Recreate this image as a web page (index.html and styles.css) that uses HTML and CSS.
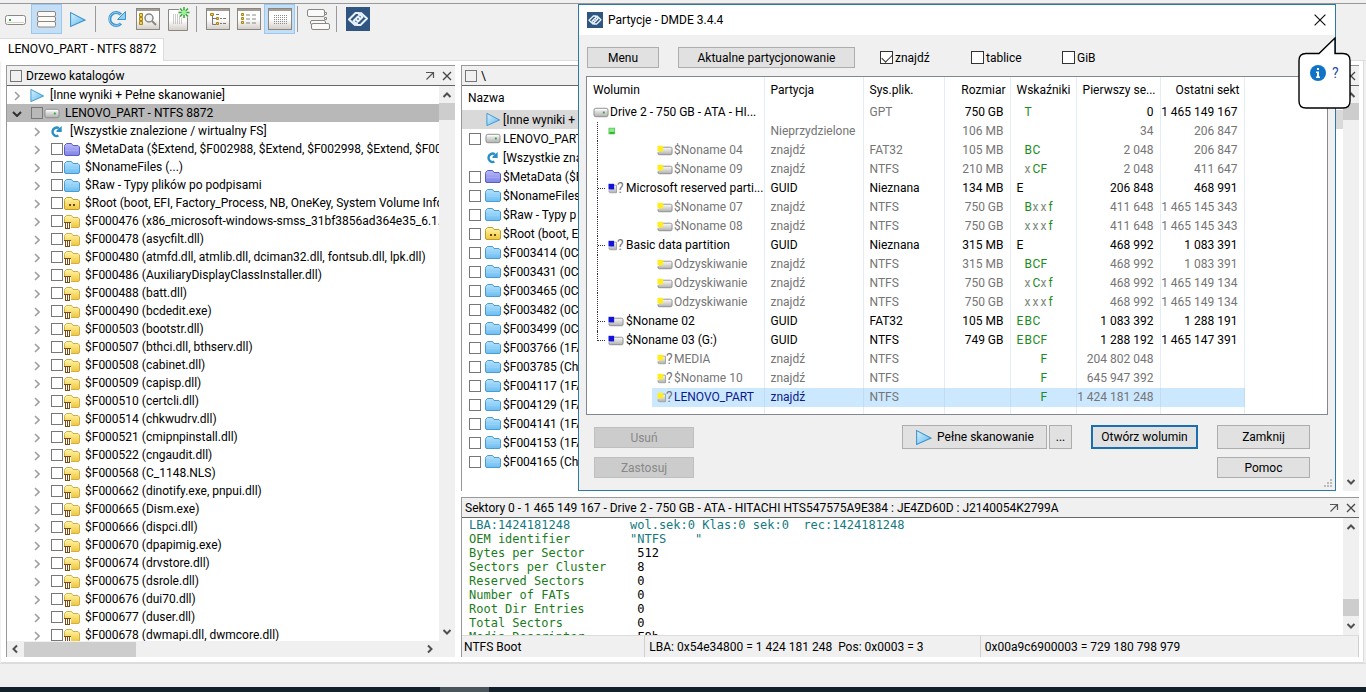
FILE: index.html
```html
<!DOCTYPE html>
<html lang="pl">
<head>
    <meta charset="UTF-8">
    <meta name="viewport" content="width=device-width, initial-scale=1.0">
    <title>DMDE 3.4.4</title>
    <link rel="stylesheet" href="styles.css">
</head>
<body>
    <svg class="sprite" aria-hidden="true">
        <defs>
            <linearGradient id="g-blue" x1="0" y1="0" x2="1" y2="1">
                <stop offset="0" stop-color="#d8f1fd"/><stop offset="1" stop-color="#5fb8ee"/>
            </linearGradient>
            <linearGradient id="g-sky" x1="0" y1="0" x2="0" y2="1">
                <stop offset="0" stop-color="#b4e2fc"/><stop offset="1" stop-color="#6dbdf2"/>
            </linearGradient>
            <linearGradient id="g-violet" x1="0" y1="0" x2="0" y2="1">
                <stop offset="0" stop-color="#b9b9f8"/><stop offset="1" stop-color="#7f84e6"/>
            </linearGradient>
            <linearGradient id="g-gold" x1="0" y1="0" x2="0" y2="1">
                <stop offset="0" stop-color="#fff7a8"/><stop offset="1" stop-color="#efc63c"/>
            </linearGradient>
            <linearGradient id="g-disk" x1="0" y1="0" x2="0" y2="1">
                <stop offset="0" stop-color="#fbfbfb"/><stop offset="1" stop-color="#b0b0b0"/>
            </linearGradient>
            <linearGradient id="g-panel" x1="0" y1="0" x2="0" y2="1">
                <stop offset="0.5" stop-color="#fff"/><stop offset="1" stop-color="#d2cdc8"/>
            </linearGradient>
            <path id="folder-shape" d="M.5 4.5V12q0 1.500 1.500 1.500h12q1.500 0 1.500-1.500V5l-1.500-1.500h-5L7.500 1.500h-5L.5 3.500z"/>
        </defs>
        <symbol id="i-play" viewBox="0 0 16 16"><path d="M1.500 1.500v13L15 8.500z" fill="url(#g-blue)" stroke="#3c94cc"/></symbol>
        <symbol id="i-disk" viewBox="0 0 16 16"><rect x=".5" y="3.500" width="15" height="9" rx="2" fill="url(#g-disk)" stroke="#8c8c8c"/><path d="M2 5h12" stroke="#fff"/><rect x="10" y="7" width="2" height="2" fill="#2ea82e"/></symbol>
        <symbol id="i-refresh" viewBox="0 0 16 16"><path d="M9.500 12.500a4.500 4.500 0 1 1 .5-8" fill="none" stroke="#2b8fc4" stroke-width="2.600"/><path d="M13 2v6.500H7.500V7z" fill="#2b8fc4"/></symbol>
        <symbol id="i-blue" viewBox="0 0 16 15"><use href="#folder-shape" fill="url(#g-sky)" stroke="#4a9bd0"/><path d="M1.500 8.500h13" stroke="#93d2f8"/></symbol>
        <symbol id="i-meta" viewBox="0 0 16 15"><use href="#folder-shape" fill="url(#g-violet)" stroke="#5a5cc0"/><path d="M1.500 8.500h13" stroke="#a3a7f2"/></symbol>
        <symbol id="i-root" viewBox="0 0 16 15"><use href="#folder-shape" fill="url(#g-gold)" stroke="#c79a2c"/><path d="M5 8h2v2H5zM9 8h2v2H9z" fill="#6b4a10"/></symbol>
        <symbol id="i-deleted" viewBox="0 0 16 15"><use href="#folder-shape" fill="url(#g-gold)" stroke="#d3ad45"/><path d="M0 8h7v7H0z" fill="#fff"/><path d="M0 8.500h7M1.500 9v5.500M3.500 9v5.500M5.500 9v5.500M1 14.500h5" stroke="#7a4a14" fill="none"/></symbol>
        <symbol id="i-free" viewBox="0 0 16 16"><rect x=".5" y="4.500" width="6" height="6" fill="#8be88b" stroke="#5cc85c"/><path d="M1 8.500h5v2H1z" fill="#2fb52f"/></symbol>
        <symbol id="i-part" viewBox="0 0 16 16"><path d="M6 4.500h8q1.500 0 1.500 1.500v5q0 1.500-1.500 1.500H2q-1.500 0-1.500-1.500V10" fill="url(#g-disk)" stroke="#8c8c8c"/><rect x="0" y="3" width="6" height="6" fill="currentColor"/></symbol>
        <symbol id="i-part-q" viewBox="0 0 16 16"><path d="M6 4.500h2.500v8H2q-1.500 0-1.500-1.500V10" fill="url(#g-disk)" stroke="#a0a0a0"/><rect x="0" y="3" width="6" height="6" fill="currentColor"/></symbol>
        <symbol id="i-open" viewBox="0 0 6 10"><path d="M1 1l4 4-4 4" fill="none" stroke="#a0a0a0" stroke-width="1.600"/></symbol>
        <symbol id="i-shut" viewBox="0 0 10 6"><path d="M1 1l4 4 4-4" fill="none" stroke="#303030" stroke-width="2"/></symbol>
        <symbol id="i-float" viewBox="0 0 10 10"><path d="M1 1.500h7.500V7M8.500 1.500L1.500 8.500" fill="none" stroke="#555" stroke-width="1.200"/></symbol>
        <symbol id="i-close" viewBox="0 0 10 10"><path d="M1 1l8 8M9 1L1 9" fill="none" stroke="#444" stroke-width="1.300"/></symbol>
        <symbol id="i-chevron" viewBox="0 0 10 10"><path d="M1.500 7L5 3.500 8.500 7" fill="none" stroke="#505050" stroke-width="2"/></symbol>
        <symbol id="i-logo" viewBox="0 0 24 24"><rect width="24" height="24" fill="#2f5580"/><g fill="none" stroke="#e8f2fb" stroke-width="2" stroke-linejoin="round"><path d="M11.500 15.500L9 18 3 12.500 9.500 6H13l3.500 4-4.500 4.500-2.500-2.500"/><path d="M12.500 8.500L15 6l6 5.500-6.500 6.500H11l-3.500-4L12 9.500l2.500 2.500"/></g></symbol>
    </svg>

    <div class="toolbar">
        <button class="tool" aria-label="Dysk"><svg width="21" height="12" viewBox="0 0 21 12"><rect x=".5" y="2.500" width="20" height="9" rx="2" fill="#fafafa" stroke="#8c8680"/><path d="M2 9.500h17" stroke="#d5d0c8"/><rect x="4" y="6" width="2" height="2" fill="#2ea82e"/></svg></button>
        <button class="tool active" aria-label="Wolumin"><svg width="19" height="17" viewBox="0 0 19 17"><g fill="#fbfaf8" stroke="#8c8680"><rect x=".5" y=".5" width="18" height="5" rx="1.500"/><rect x=".5" y="5.500" width="18" height="5" rx="1.500"/><rect x=".5" y="10.500" width="18" height="5.500" rx="1.500"/></g></svg></button>
        <button class="tool" aria-label="Skanuj"><svg width="17" height="17"><use href="#i-play"/></svg></button>
        <span class="sep"></span>
        <button class="tool" aria-label="Odśwież"><svg width="20" height="18" viewBox="0 0 20 18"><path d="M14 13.500a6.500 6.500 0 1 1 0-9" fill="none" stroke="#3b93cc" stroke-width="3"/><path d="M13.600 13.500a6.500 6.500 0 1 1 0-9" fill="none" stroke="#8fd0f2"/><path d="M18.500 1.500v8h-8z" fill="#8fd0f2" stroke="#3b93cc"/></svg></button>
        <button class="tool" aria-label="Szukaj"><svg width="24" height="22" viewBox="0 0 24 22"><rect x=".5" y=".5" width="23" height="21" fill="url(#g-panel)" stroke="#8c8680"/><path d="M1 2h22" stroke="#a39d96" stroke-width="2"/><g fill="#f4d04a" stroke="#a8851a"><path d="M3.500 5.500h3v3h-3zM3.500 9.500h3v3h-3zM3.500 13.500h3v3h-3z"/></g><circle cx="13" cy="10" r="4" fill="#eef4f8" stroke="#8c8680" stroke-width="1.500"/><path d="M16 13l4 4" stroke="#8c8680" stroke-width="2"/></svg></button>
        <button class="tool" aria-label="Nowy"><svg width="22" height="24" viewBox="0 0 22 24"><path d="M.5 2.500h19v21H.5z" fill="url(#g-panel)" stroke="#8c8680"/><path d="M5 8h10M5 10h10M5 12h10M5 14h10M5 16h10" stroke="#999" stroke-dasharray="1 1"/><circle cx="16" cy="5.500" r="6" fill="#f0f0f0"/><path d="M16 0v11M10.500 5.500h11M12 1.500l8 8M20 1.500l-8 8" stroke="#36a836" stroke-width="1.500"/><circle cx="16" cy="5.500" r="2.500" fill="#9bf09b"/></svg></button>
        <span class="sep"></span>
        <button class="tool" aria-label="Drzewo"><svg width="24" height="22" viewBox="0 0 24 22"><rect x=".5" y=".5" width="23" height="21" fill="url(#g-panel)" stroke="#8c8680"/><path d="M1 2h22" stroke="#a39d96" stroke-width="2"/><path d="M6.500 7v9.500H10M6.500 10.500H10M14 10.500h2m1 0h3M14 15.500h2m1 0h3M10 6.500h3" stroke="#777" fill="none"/><g fill="#f4d04a" stroke="#a8851a"><path d="M4.500 5.500h3v2h-3zM10.500 9.500h2v2h-2zM10.500 14.500h2v2h-2z"/></g></svg></button>
        <button class="tool" aria-label="Lista"><svg width="24" height="22" viewBox="0 0 24 22"><rect x=".5" y=".5" width="23" height="21" fill="url(#g-panel)" stroke="#8c8680"/><path d="M1 2h22" stroke="#a39d96" stroke-width="2"/><path d="M9 7h4m2 0h4M9 11h4m2 0h4M9 15h4m2 0h4" stroke="#888"/><g fill="#f4d04a" stroke="#a8851a"><path d="M4.500 5.500h2v2h-2zM4.500 9.500h2v2h-2zM4.500 13.500h2v2h-2z"/></g></svg></button>
        <button class="tool active" aria-label="Hex"><svg width="24" height="22" viewBox="0 0 24 22"><rect x=".5" y=".5" width="23" height="21" fill="url(#g-panel)" stroke="#8c8680"/><path d="M1 2h22" stroke="#a39d96" stroke-width="2"/><path d="M6 7.500h13M6 9.500h13M6 11.500h13M6 13.500h13M6 15.500h13" stroke="#8a8a8a" stroke-dasharray="1 1"/></svg></button>
        <span class="sep"></span>
        <button class="tool" aria-label="Kopiuj"><svg width="24" height="23" viewBox="0 0 24 23"><g fill="#fafafa" stroke="#8c8680"><rect x=".5" y="1.500" width="17" height="7" rx="1.500"/><rect x="3.500" y="12.500" width="15" height="4" rx="1.500"/><rect x="4.500" y="15.500" width="18" height="6" rx="1.500"/><path d="M17.500 4.500h2v2h-2zM17.500 9.500h2v2h-2z"/></g></svg></button>
        <span class="sep"></span>
        <button class="tool" aria-label="DMDE"><svg width="24" height="24"><use href="#i-logo"/></svg></button>
    </div>

    <div class="tabs"><a href="#" class="tab">LENOVO_PART - NTFS 8872</a></div>

    <main class="workspace">
        <section class="pane tree-pane">
            <header class="pane-head">
                <label><input type="checkbox" class="check"> Drzewo katalogów</label>
                <svg width="10" height="10"><use href="#i-float"/></svg>
                <svg width="10" height="10"><use href="#i-close"/></svg>
            </header>
            <div class="pane-body">
                <ul class="tree" id="tree"></ul>
                <div class="vbar">
                    <svg width="10" height="10"><use href="#i-chevron"/></svg>
                    <span class="thumb"></span>
                    <svg class="down" width="10" height="10"><use href="#i-chevron"/></svg>
                </div>
            </div>
            <div class="hbar">
                <svg class="prev" width="10" height="10"><use href="#i-chevron"/></svg>
                <span class="thumb"></span>
                <svg class="next" width="10" height="10"><use href="#i-chevron"/></svg>
            </div>
        </section>

        <div class="side">
            <section class="pane files-pane">
                <header class="pane-head">
                    <label><input type="checkbox" class="check"> \</label>
                    <svg width="10" height="10"><use href="#i-close"/></svg>
                </header>
                <div class="pane-body">
                    <div class="files">
                        <div class="files-head">Nazwa</div>
                        <ul id="files"></ul>
                    </div>
                    <div class="vbar">
                        <svg width="10" height="10"><use href="#i-chevron"/></svg>
                        <span class="thumb"></span>
                        <svg class="down" width="10" height="10"><use href="#i-chevron"/></svg>
                    </div>
                </div>
            </section>

            <section class="pane hex-pane">
                <header class="pane-head">
                    <span>Sektory 0 - 1 465 149 167 - Drive 2 - 750 GB - ATA - HITACHI HTS547575A9E384 : JE4ZD60D : J2140054K2799A</span>
                    <svg width="10" height="10"><use href="#i-float"/></svg>
                    <svg width="10" height="10"><use href="#i-close"/></svg>
                </header>
                <div class="pane-body">
                    <dl class="hex">
                        <dt class="teal">LBA:1424181248</dt><dd class="teal">wol.sek:0 Klas:0 sek:0  rec:1424181248</dd>
                        <dt>OEM identifier</dt><dd class="teal">"NTFS    "</dd>
                        <dt>Bytes per Sector</dt><dd> 512</dd>
                        <dt>Sectors per Cluster</dt><dd> 8</dd>
                        <dt>Reserved Sectors</dt><dd> 0</dd>
                        <dt>Number of FATs</dt><dd> 0</dd>
                        <dt>Root Dir Entries</dt><dd> 0</dd>
                        <dt>Total Sectors</dt><dd> 0</dd>
                        <dt>Media Descriptor</dt><dd> F8h</dd>
                    </dl>
                    <div class="vbar low">
                        <svg width="10" height="10"><use href="#i-chevron"/></svg>
                        <span class="thumb"></span>
                        <svg class="down" width="10" height="10"><use href="#i-chevron"/></svg>
                    </div>
                </div>
                <footer class="hex-status">
                    <span>NTFS Boot</span>
                    <span>LBA: 0x54e34800 = 1 424 181 248&nbsp; Pos: 0x0003 = 3</span>
                    <span>0x00a9c6900003 = 729 180 798 979</span>
                </footer>
            </section>
        </div>
    </main>
    <footer class="statusbar"></footer>
    <div class="taskbar"><span></span></div>

    <div class="dialog" role="dialog" aria-labelledby="dialog-title">
        <header class="dialog-title">
            <svg width="16" height="16"><use href="#i-logo"/></svg>
            <span id="dialog-title">Partycje - DMDE 3.4.4</span>
            <button class="close" aria-label="Zamknij okno"><svg width="12" height="12" viewBox="0 0 10 10"><path d="M.5.5l9 9M9.500.5l-9 9" stroke="#111" fill="none"/></svg></button>
        </header>
        <div class="dialog-tools">
            <button class="btn menu">Menu</button>
            <button class="btn current">Aktualne partycjonowanie</button>
            <label><input type="checkbox" class="check" checked>znajdź</label>
            <label><input type="checkbox" class="check">tablice</label>
            <label><input type="checkbox" class="check">GiB</label>
        </div>
        <div class="volumes">
            <table>
                <colgroup><col class="c-name"><col class="c-part"><col class="c-fs"><col class="c-size"><col class="c-flags"><col class="c-sec"><col class="c-sec"></colgroup>
                <thead>
                    <tr><th>Wolumin</th><th>Partycja</th><th>Sys.plik.</th><th class="num">Rozmiar</th><th>Wskaźniki</th><th class="num">Pierwszy se...</th><th class="num">Ostatni sekt</th></tr>
                </thead>
                <tbody id="volumes"></tbody>
            </table>
        </div>
        <div class="dialog-actions">
            <div class="stack">
                <button class="btn" disabled>Usuń</button>
                <button class="btn" disabled>Zastosuj</button>
            </div>
            <div class="scan">
                <button class="btn scan-full"><svg width="17" height="17"><use href="#i-play"/></svg>Pełne skanowanie</button>
                <button class="btn more">...</button>
                <button class="btn primary">Otwórz wolumin</button>
            </div>
            <div class="stack end">
                <button class="btn tall">Zamknij</button>
                <button class="btn">Pomoc</button>
            </div>
        </div>
        <svg class="grip" width="9" height="9" viewBox="0 0 9 9"><path d="M6 0h2v2H6zM3 3h2v2H3zM6 3h2v2H6zM0 6h2v2H0zM3 6h2v2H3zM6 6h2v2H6z" fill="#bbb"/></svg>
    </div>

    <div class="callout">
        <svg class="bubble" width="53" height="72" viewBox="0 0 53 72"><path d="M8 16.500h13L37 1v15.500h8q7 0 7 7V64q0 7-7 7H8q-7 0-7-7V23.500q0-7 7-7z" fill="#fff" stroke="#000" stroke-width="1.400"/></svg>
        <div class="callout-text">
            <svg width="16" height="16" viewBox="0 0 16 16"><circle cx="8" cy="8" r="8" fill="#1173c7"/><path d="M7 3h2v2H7zM6 6.500h3v5h1V13H6v-1.500h1V8H6z" fill="#fff"/></svg>
            <span>?</span>
        </div>
    </div>

    <script>
        const icon = name => `<svg class="icon"><use href="#i-${name}"/></svg>`;

        // [level, icon, text, checkbox, state]
        const tree = [
            [0, 'play', '[Inne wyniki + Pełne skanowanie]', false],
            [0, 'disk', 'LENOVO_PART - NTFS 8872', true, 'selected'],
            [1, 'refresh', '[Wszystkie znalezione / wirtualny FS]', false],
            [1, 'meta', '$MetaData ($Extend, $F002988, $Extend, $F002998, $Extend, $F003002)', true],
            [1, 'blue', '$NonameFiles (...)', true],
            [1, 'blue', '$Raw - Typy plików po podpisami', true],
            [1, 'root', '$Root (boot, EFI, Factory_Process, NB, OneKey, System Volume Information)', true]
        ];
        [
            '476 (x86_microsoft-windows-smss_31bf3856ad364e35_6.1.7601)', '478 (asycfilt.dll)',
            '480 (atmfd.dll, atmlib.dll, dciman32.dll, fontsub.dll, lpk.dll)', '486 (AuxiliaryDisplayClassInstaller.dll)',
            '488 (batt.dll)', '490 (bcdedit.exe)', '503 (bootstr.dll)', '507 (bthci.dll, bthserv.dll)',
            '508 (cabinet.dll)', '509 (capisp.dll)', '510 (certcli.dll)', '514 (chkwudrv.dll)',
            '521 (cmipnpinstall.dll)', '522 (cngaudit.dll)', '568 (C_1148.NLS)', '662 (dinotify.exe, pnpui.dll)',
            '665 (Dism.exe)', '666 (dispci.dll)', '670 (dpapimig.exe)', '674 (drvstore.dll)',
            '675 (dsrole.dll)', '676 (dui70.dll)', '677 (duser.dll)', '678 (dwmapi.dll, dwmcore.dll)'
        ].forEach(name => tree.push([1, 'deleted', '$F000' + name, true]));

        document.getElementById('tree').innerHTML = tree.map(([level, ic, text, box, state]) => `
            <li class="level-${level} ${box ? 'boxed' : ''} ${state || ''}">
                <span class="twist"><svg class="${state ? 'shut' : 'open'}"><use href="#i-${state ? 'shut' : 'open'}"/></svg></span>
                <label>${box ? '<input type="checkbox" class="check">' : ''}${icon(ic)}<span>${text}</span></label>
            </li>`).join('');

        const files = [
            ['play', '[Inne wyniki +'], ['disk', 'LENOVO_PART'], ['refresh', '[Wszystkie zna'],
            ['meta', '$MetaData ($E'], ['blue', '$NonameFiles'], ['blue', '$Raw - Typy p'], ['root', '$Root (boot, E']
        ];
        ['3414 (0CB', '3431 (0CB', '3465 (0CB', '3482 (0CB', '3499 (0CB', '3766 (1FA', '3785 (Chk',
            '4117 (1FA', '4129 (1FA', '4141 (1FA', '4153 (1FA', '4165 (Chk'
        ].forEach(name => files.push(['blue', '$F00' + name]));

        document.getElementById('files').innerHTML = files.map(([ic, text]) => {
            const box = ic !== 'play' && ic !== 'refresh';
            return `<li class="${ic === 'play' ? 'selected' : ''}"><label>
                ${box ? '<input type="checkbox" class="check">' : '<span class="nocheck"></span>'}${icon(ic)}<span>${text}</span></label></li>`;
        }).join('');

        // row class, icon, name, partition, file system, size, flags (x and e are special), first and last sector
        const volumes = [
            ['drive', 'disk', 'Drive 2 - 750 GB - ATA - HI...', '', 'GPT', '750 GB', ' T', '0', '1 465 149 167'],
            ['free', 'free', '', 'Nieprzydzielone', '', '106 MB', '', '34', '206 847'],
            ['found', 'part', '$Noname 04', 'znajdź', 'FAT32', '105 MB', ' BC', '2 048', '206 847'],
            ['found', 'part', '$Noname 09', 'znajdź', 'NTFS', '210 MB', ' xCF', '2 048', '411 647'],
            ['part', 'part-q', 'Microsoft reserved parti...', 'GUID', 'Nieznana', '134 MB', 'e', '206 848', '468 991'],
            ['found', 'part', '$Noname 07', 'znajdź', 'NTFS', '750 GB', ' Bxxf', '411 648', '1 465 145 343'],
            ['found', 'part', '$Noname 08', 'znajdź', 'NTFS', '750 GB', ' xxxf', '411 648', '1 465 145 343'],
            ['part', 'part-q', 'Basic data partition', 'GUID', 'Nieznana', '315 MB', 'e', '468 992', '1 083 391'],
            ['found', 'part', 'Odzyskiwanie', 'znajdź', 'NTFS', '315 MB', ' BCF', '468 992', '1 083 391'],
            ['found', 'part', 'Odzyskiwanie', 'znajdź', 'NTFS', '750 GB', ' xCxf', '468 992', '1 465 149 134'],
            ['found', 'part', 'Odzyskiwanie', 'znajdź', 'NTFS', '750 GB', ' xxxf', '468 992', '1 465 149 134'],
            ['part', 'part', '$Noname 02', 'GUID', 'FAT32', '105 MB', 'EBC', '1 083 392', '1 288 191'],
            ['part last', 'part', '$Noname 03 (G:)', 'GUID', 'NTFS', '749 GB', 'EBCF', '1 288 192', '1 465 147 391'],
            ['found after', 'part-q', 'MEDIA', 'znajdź', 'NTFS', '', '   F', '204 802 048', ''],
            ['found after', 'part-q', '$Noname 10', 'znajdź', 'NTFS', '', '   F', '645 947 392', ''],
            ['found after selected', 'part-q', 'LENOVO_PART', 'znajdź', 'NTFS', '', '   F', '1 424 181 248', '']
        ];

        const flag = c => c === 'e' ? '<i class="plain">E</i>' : `<i class="${c === 'x' ? 'grey' : 'green'}">${c}</i>`;

        document.getElementById('volumes').innerHTML = volumes.map(([kind, ic, name, part, fs, size, flags, first, last]) => `
            <tr class="${kind}">
                <td class="name"><div>${icon(ic)}${ic === 'part-q' ? '<b class="query">?</b>' : ''}<span>${name}</span></div></td>
                <td>${part}</td><td class="fs">${fs}</td><td class="num">${size}</td>
                <td class="flags">${[...flags].map(flag).join('')}</td>
                <td class="num">${first}</td><td class="num">${last}</td>
            </tr>`).join('') + '<tr class="filler">' + '<td></td>'.repeat(7) + '</tr>';
    </script>
</body>
</html>
```
FILE: styles.css
```css
* {
    box-sizing: border-box;
}
body {
    margin: 0;
    height: 100vh;
    display: flex;
    flex-direction: column;
    overflow: hidden;
    background: #f0f0f0;
    color: #000;
    font: 12px/18px Roboto, "Open Sans", sans-serif;
}
button, input {
    font: inherit;
    color: inherit;
}
ul, dl, dd {
    margin: 0;
    padding: 0;
    list-style: none;
}
svg {
    display: block;
    flex: none;
}
.sprite {
    position: absolute;
    width: 0;
    height: 0;
}
.icon {
    width: 16px;
    height: 15px;
}
.check {
    appearance: none;
    flex: none;
    width: 12px;
    height: 12px;
    margin: 0;
    border: 1px solid #777;
    background: #fff;
}

/* toolbar */
.toolbar {
    flex: none;
    display: flex;
    height: 38px;
    padding-top: 1px;
    border-top: 3px solid #f0f0f0;
    box-shadow: inset 0 1px #999;
}
.tool {
    width: 31px;
    height: 30px;
    padding: 0;
    display: flex;
    align-items: center;
    justify-content: center;
    border: 1px solid transparent;
    background: none;
}
.tool.active {
    background: #c4def5;
    border-color: #9bc8ee;
}
.sep {
    width: 1px;
    height: 26px;
    margin: 2px 5px 0 2px;
    background: #999;
}

/* tabs */
.tabs {
    flex: none;
    height: 23px;
    display: flex;
    background: #f0f0f0;
    border-bottom: 1px solid #dcdcdc;
}
.tab {
    height: 23px;
    padding: 1px 7px 0 8px;
    border: 1px solid #dcdcdc;
    border-width: 1px 1px 0 0;
    background: #fff;
    color: #000;
    text-decoration: none;
    white-space: nowrap;
}

/* workspace */
.workspace {
    flex: 1;
    min-height: 0;
    display: grid;
    grid-template-columns: 449px minmax(0, 1fr);
    grid-template-rows: minmax(0, 1fr);
    gap: 6px;
    margin: 0 2px 0 1px;
    padding: 4px 4px 5px 5px;
    background: #fff;
    border: solid #dcdcdc;
    border-width: 0 1px 1px 0;
}
.side {
    display: flex;
    flex-direction: column;
    gap: 6px;
    min-height: 0;
}
.pane {
    display: flex;
    flex-direction: column;
    min-height: 0;
    border-left: 1px solid #999;
}
.pane-head {
    flex: none;
    display: flex;
    align-items: center;
    gap: 7px;
    height: 21px;
    padding: 0 3px 0 3px;
    background: #f0f0f0;
    border-top: 1px solid #999;
    border-bottom: 1px solid #666;
    white-space: nowrap;
}
.pane-head label,
.pane-head > span {
    display: flex;
    flex: 1;
    align-items: center;
    gap: 4px;
}
.pane-head .check {
    background: none;
}
.pane-body {
    flex: 1;
    display: flex;
    min-height: 0;
}
.files-pane {
    flex: 1;
}
.hex-pane {
    height: 160px;
}

/* scrollbars */
.vbar,
.hbar {
    flex: none;
    display: flex;
    align-items: center;
    background: #f0f0f0;
}
.vbar {
    flex-direction: column;
    width: 16px;
    padding: 4px 0;
}
.hbar {
    height: 16px;
    padding: 0 20px 0 3px;
}
.thumb {
    background: #cdcdcd;
}
.vbar .thumb {
    width: 16px;
    height: 17px;
    margin-top: 3px;
}
.vbar.low .thumb {
    margin-top: auto;
    margin-bottom: 5px;
}
.hbar .thumb {
    width: 112px;
    height: 15px;
    margin-left: 4px;
}
.down {
    transform: rotate(180deg);
    margin-top: auto;
}
.vbar.low .down {
    margin-top: 0;
}
.prev {
    transform: rotate(-90deg);
}
.next {
    transform: rotate(90deg);
    margin-left: auto;
}

/* directory tree */
.tree {
    flex: 1;
    overflow: hidden;
}
.tree li,
.tree label {
    display: flex;
    align-items: center;
    height: 18px;
    white-space: nowrap;
}
.tree .level-1 {
    padding-left: 20px;
}
.tree .selected {
    background: #b8b8b8;
}
.tree .selected .check {
    background: none;
}
.twist {
    flex: none;
    width: 20px;
}
.twist .open {
    width: 6px;
    height: 10px;
    margin: 2px 0 0 7px;
}
.twist .shut {
    width: 10px;
    height: 6px;
    margin: 2px 0 0 5px;
}
.tree label {
    padding-left: 2px;
    gap: 5px;
}
.tree .boxed label {
    padding-left: 4px;
}
.tree .boxed .check {
    margin-right: -4px;
}

/* file list */
.files {
    flex: 1;
    overflow: hidden;
}
.files-head {
    height: 24px;
    padding: 3px 6px;
}
.files li,
.files label {
    display: flex;
    align-items: center;
    height: 19px;
    white-space: nowrap;
}
.files label {
    padding-left: 7px;
}
.files .icon {
    margin: 0 2px 0 4px;
}
.files .selected {
    background: #d9d9d9;
}
.nocheck {
    width: 12px;
}

/* sector view */
.hex {
    flex: 1;
    display: grid;
    grid-template-columns: 161px 1fr;
    grid-auto-rows: 14px;
    padding: 0 0 0 7px;
    overflow: hidden;
    font: 12px/14px "DejaVu Sans Mono", monospace;
    white-space: pre;
}
.hex dt {
    color: #1c7c1c;
}
.hex .teal {
    color: #14797f;
}
.hex-status {
    flex: none;
    display: flex;
    height: 22px;
    background: #f0f0f0;
    border-top: 1px solid #dcdcdc;
    white-space: nowrap;
}
.hex-status span {
    padding: 2px 5px 0 4px;
    border-right: 1px solid #d0d0d0;
}
.hex-status span:nth-child(1) {
    flex: 181;
    padding-left: 2px;
}
.hex-status span:nth-child(2) {
    flex: 336;
}
.hex-status span:nth-child(3) {
    flex: 380;
}
.statusbar {
    flex: none;
    height: 24px;
    border-top: 1px solid #dcdcdc;
}
.taskbar {
    flex: none;
    height: 5px;
    background: #14212a;
}
.taskbar span {
    display: block;
    width: 49px;
    height: 5px;
    margin-left: 440px;
    background: #49545b;
}

/* partition dialog */
.dialog {
    position: absolute;
    top: 4px;
    left: 578px;
    right: 30px;
    padding-bottom: 12px;
    background: #f0f0f0;
    border: 1px solid #2a7aa5;
}
.dialog-title {
    display: flex;
    align-items: center;
    gap: 5px;
    height: 30px;
    padding: 0 9px 0 8px;
    background: #fff;
}
.close {
    display: flex;
    margin-left: auto;
    padding: 0;
    border: 0;
    background: none;
}
.dialog-tools {
    display: flex;
    align-items: center;
    padding: 12px 8px 8px;
}
.dialog-tools label {
    display: flex;
    align-items: center;
    gap: 2px;
    width: 91px;
}
.dialog-tools .check {
    width: 13px;
    height: 13px;
    border-color: #333;
}
.dialog-tools .check:checked::after {
    content: "";
    display: block;
    width: 9px;
    height: 5px;
    margin: 2px 0 0 1px;
    border: solid #333;
    border-width: 0 0 1px 1px;
    transform: rotate(-45deg);
}
.btn {
    display: flex;
    align-items: center;
    justify-content: center;
    height: 21px;
    padding: 0;
    border: 1px solid #adadad;
    background: #e1e1e1;
    white-space: nowrap;
}
.btn:disabled {
    background: #ccc;
    border-color: #bfbfbf;
    color: #888;
}
.menu {
    width: 72px;
    margin-right: 19px;
}
.current {
    width: 177px;
    margin-right: 25px;
}

.volumes {
    margin: 0 7px;
    background: #fff;
    border: 1px solid #828790;
}
.volumes table {
    width: 657px;
    table-layout: fixed;
    border-collapse: collapse;
}
.c-name { width: 177px; }
.c-part { width: 99px; }
.c-fs { width: 81px; }
.c-size, .c-flags { width: 66px; }
.c-sec { width: 84px; }
.volumes th,
.volumes td {
    height: 19px;
    padding: 0 6px;
    border-right: 1px solid #e3edf5;
    font-weight: normal;
    line-height: 17px;
    text-align: left;
    white-space: nowrap;
}
.volumes th {
    height: 26px;
    padding-right: 4px;
}
.volumes .num {
    padding: 0 6px 0 0;
    text-align: right;
}
.volumes th.num {
    padding-right: 4px;
}
.volumes .filler td {
    height: 7px;
}
.volumes .name {
    position: relative;
    padding: 0 0 0 6px;
}
.name div {
    display: flex;
    align-items: center;
    gap: 1px;
}
.part .name div,
.free .name div {
    padding-left: 15px;
    gap: 2px;
}
.found .name div {
    padding-left: 64px;
}
.query {
    width: 7px;
    margin: 0 0 0 -8px;
    color: #777;
    font-weight: normal;
    font-size: 14px;
}
.part .query {
    margin-left: -9px;
}
.name::before {
    content: "";
    position: absolute;
    top: 0;
    bottom: 0;
    left: 10px;
    border-left: 1px dotted #333;
}
.drive .name::before,
.after .name::before {
    display: none;
}
.last .name::before {
    bottom: 9px;
}
.part .name::after {
    content: "";
    position: absolute;
    top: 9px;
    left: 11px;
    width: 7px;
    border-top: 1px dotted #333;
}
.part .icon {
    color: #1414d8;
}
.found .icon {
    color: #ffee1c;
}
.free td,
.found td,
.drive .fs {
    color: #757575;
}
.volumes .selected td {
    background: #cce8ff;
    border-right-color: #bfdcf2;
}
.volumes .selected .name {
    background: linear-gradient(to right, transparent 65px, #cce8ff 65px);
}
.selected .name,
.volumes .selected .name + td {
    color: #0a1a8c;
}
.flags i {
    display: inline-block;
    width: 8px;
    font-style: normal;
    white-space: pre;
}
.flags .green { color: #1a8c1a; }
.flags .grey { color: #7c8a7c; }
.flags .plain { color: #000; }

.dialog-actions {
    display: flex;
    justify-content: space-between;
    padding: 10px 25px 0 15px;
}
.stack {
    display: flex;
    flex-direction: column;
    gap: 9px;
    width: 100px;
    padding-top: 2px;
}
.stack.end {
    width: 93px;
    gap: 8px;
    padding-top: 0;
}
.tall {
    height: 24px;
}
.scan {
    display: flex;
    flex: 1;
    justify-content: flex-end;
    gap: 2px;
    margin-right: 19px;
}
.scan .btn {
    height: 24px;
}
.scan-full {
    width: 145px;
    gap: 5px;
}
.more {
    width: 23px;
}
.btn.primary {
    width: 107px;
    margin-left: 17px;
    border: 2px solid #1b6fb0;
}
.grip {
    position: absolute;
    right: 2px;
    bottom: 2px;
}

/* info balloon on the dialog corner */
.callout {
    position: absolute;
    top: 37px;
    right: 15px;
    width: 53px;
    height: 72px;
}
.bubble {
    position: absolute;
}
.callout-text {
    position: relative;
    display: flex;
    align-items: center;
    gap: 6px;
    padding: 27px 0 0 12px;
    color: #1d4fa5;
    font-size: 14px;
}
```
